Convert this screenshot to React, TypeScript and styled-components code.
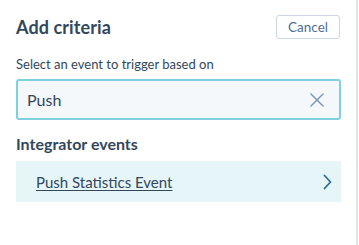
import React, { useState } from 'react';
import styled, { createGlobalStyle } from 'styled-components';

const GlobalStyle = createGlobalStyle`
  html, body {
    margin: 0;
    padding: 0;
    background: #ffffff;
  }
  body {
    font-family: 'Lato', 'Liberation Sans', sans-serif;
    color: #33475b;
  }
`;

const Panel = styled.div`
  width: 358px;
  height: 245px;
  box-sizing: border-box;
  border-right: 2px solid #dfe3eb;
  padding: 15px 15px 0 16px;
  display: flex;
  flex-direction: column;
`;

const Header = styled.div`
  display: flex;
  align-items: center;
  justify-content: space-between;
  height: 24px;
  padding-right: 1px;
`;

const Title = styled.h2`
  margin: 0;
  font-size: 18px;
  font-weight: 700;
  color: #33475b;
  letter-spacing: 0.1px;
`;

const CancelButton = styled.button`
  width: 64px;
  height: 24px;
  box-sizing: border-box;
  border: 1px solid #cbd6e2;
  border-radius: 3px;
  background: #ffffff;
  color: #516f90;
  font-family: inherit;
  font-size: 13.5px;
  padding: 0;
  cursor: pointer;
`;

const FieldLabel = styled.label`
  display: block;
  margin-top: 16px;
  font-size: 13px;
  line-height: 18px;
  color: #33475b;
`;

const SearchBox = styled.div`
  margin-top: 6px;
  height: 41px;
  box-sizing: border-box;
  display: flex;
  align-items: center;
  border: 2px solid #7fd1de;
  border-radius: 3px;
  background: #f5f8fa;
  padding: 0 14px 0 9px;
`;

const SearchInput = styled.input`
  flex: 1;
  border: none;
  outline: none;
  background: transparent;
  font-family: inherit;
  font-size: 16px;
  color: #33475b;
  padding: 0;
`;

const ClearButton = styled.button`
  border: none;
  background: transparent;
  padding: 0;
  display: flex;
  cursor: pointer;
`;

const SectionTitle = styled.h3`
  margin: 14px 0 0 0;
  font-size: 16px;
  font-weight: 700;
  line-height: 20px;
  color: #33475b;
`;

const EventRow = styled.div`
  margin-top: 7px;
  height: 41px;
  display: flex;
  align-items: center;
  justify-content: space-between;
  background: #e5f5f8;
  padding: 0 8px 0 20px;
`;

const EventLink = styled.a`
  font-size: 15px;
  color: #33475b;
  text-decoration: underline;
  text-underline-offset: 2px;
  cursor: pointer;
`;

const Chevron = () => (
  <svg width="11" height="16" viewBox="0 0 11 16" fill="none">
    <path d="M2.5 1.5 L8.5 8 L2.5 14.5" stroke="#2f6f8f" strokeWidth="1.8" strokeLinecap="round" strokeLinejoin="round" />
  </svg>
);

const CloseIcon = () => (
  <svg width="16" height="16" viewBox="0 0 16 16" fill="none">
    <path d="M2 2 L14 14 M14 2 L2 14" stroke="#7c98b6" strokeWidth="1.5" strokeLinecap="round" />
  </svg>
);

export default function App() {
  const [query, setQuery] = useState('Push');

  return (
    <>
      <GlobalStyle />
      <Panel>
        <Header>
          <Title>Add criteria</Title>
          <CancelButton>Cancel</CancelButton>
        </Header>
        <FieldLabel>Select an event to trigger based on</FieldLabel>
        <SearchBox>
          <SearchInput value={query} onChange={e => setQuery(e.target.value)} />
          <ClearButton onClick={() => setQuery('')}>
            <CloseIcon />
          </ClearButton>
        </SearchBox>
        <SectionTitle>Integrator events</SectionTitle>
        <EventRow>
          <EventLink>Push Statistics Event</EventLink>
          <Chevron />
        </EventRow>
      </Panel>
    </>
  );
}
